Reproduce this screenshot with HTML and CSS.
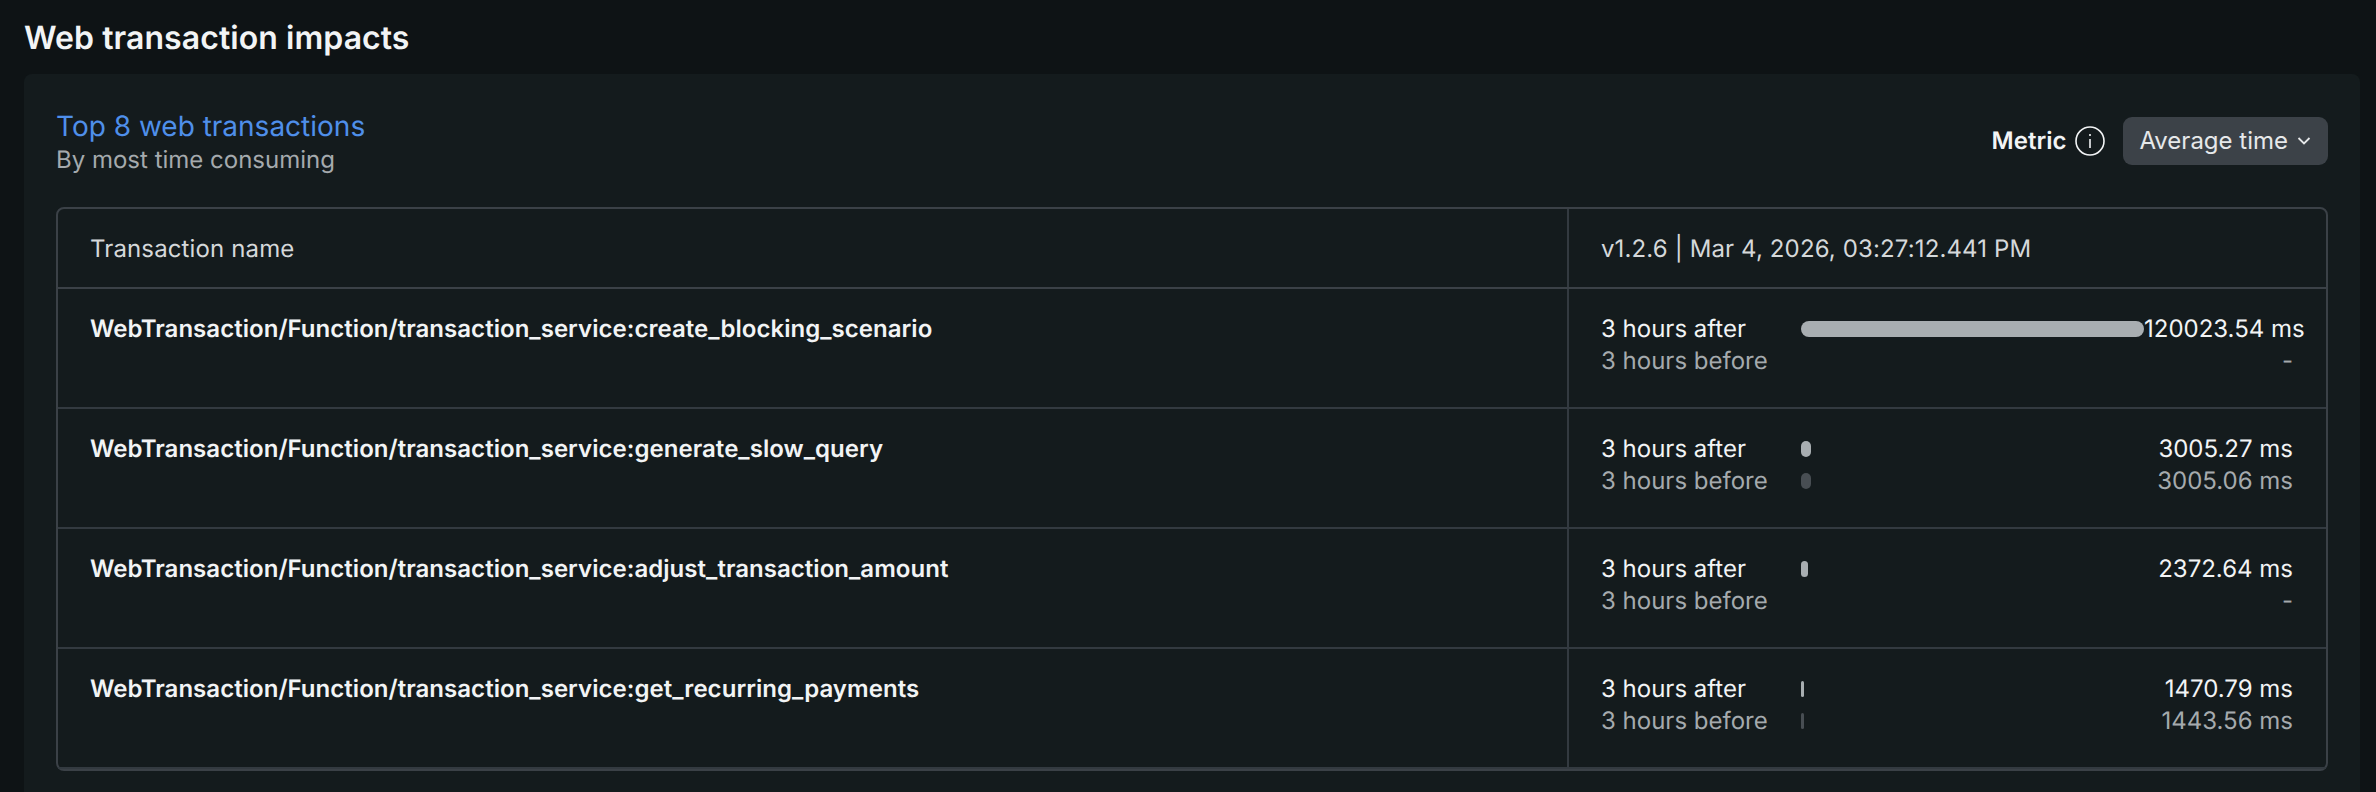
FILE: index.html
```html
<!DOCTYPE html>
<html>
  <head>
    <meta name="viewport" content="width=device-width, initial-scale=1.0">
    <title>Web transaction impacts</title>
    <link rel="stylesheet" href="styles.css">
  </head>
  <body>
    <h1 class="page-title">Web transaction impacts</h1>
    <div class="card">
      <div class="card-header">
        <div class="card-heading">
          <a class="card-title" href="#">Top 8 web transactions</a>
          <div class="card-subtitle">By most time consuming</div>
        </div>
        <div class="metric">
          <span class="metric-label">Metric</span>
          <svg class="info-icon" viewBox="0 0 30 30" width="30" height="30" fill="none" stroke="#f2f4f5" stroke-width="1.6">
            <circle cx="15" cy="15" r="14"/>
            <path d="M15 13v9"/>
            <path d="M15 8v2"/>
          </svg>
          <button class="metric-select">
            Average time
            <svg viewBox="0 0 14 10" width="14" height="10" fill="none" stroke="#e6e8ea" stroke-width="1.8">
              <path d="M1.5 2 7 7.5 12.5 2"/>
            </svg>
          </button>
        </div>
      </div>

      <div class="table">
        <div class="row head">
          <div class="name-cell">Transaction name</div>
          <div class="data-cell">v1.2.6 | Mar 4, 2026, 03:27:12.441 PM</div>
        </div>

        <div class="row">
          <div class="name-cell">WebTransaction/Function/transaction_service:create_blocking_scenario</div>
          <div class="data-cell">
            <div class="line">
              <span class="period">3 hours after</span>
              <span class="track"><span class="bar" style="width: 343px"></span></span>
              <span class="value">120023.54 ms</span>
            </div>
            <div class="line before">
              <span class="period">3 hours before</span>
              <span class="track"></span>
              <span class="value">-</span>
            </div>
          </div>
        </div>

        <div class="row">
          <div class="name-cell">WebTransaction/Function/transaction_service:generate_slow_query</div>
          <div class="data-cell">
            <div class="line">
              <span class="period">3 hours after</span>
              <span class="track"><span class="bar" style="width: 10px"></span></span>
              <span class="value">3005.27 ms</span>
            </div>
            <div class="line before">
              <span class="period">3 hours before</span>
              <span class="track"><span class="bar" style="width: 10px"></span></span>
              <span class="value">3005.06 ms</span>
            </div>
          </div>
        </div>

        <div class="row">
          <div class="name-cell">WebTransaction/Function/transaction_service:adjust_transaction_amount</div>
          <div class="data-cell">
            <div class="line">
              <span class="period">3 hours after</span>
              <span class="track"><span class="bar" style="width: 7px"></span></span>
              <span class="value">2372.64 ms</span>
            </div>
            <div class="line before">
              <span class="period">3 hours before</span>
              <span class="track"></span>
              <span class="value">-</span>
            </div>
          </div>
        </div>

        <div class="row">
          <div class="name-cell">WebTransaction/Function/transaction_service:get_recurring_payments</div>
          <div class="data-cell">
            <div class="line">
              <span class="period">3 hours after</span>
              <span class="track"><span class="bar" style="width: 3px"></span></span>
              <span class="value">1470.79 ms</span>
            </div>
            <div class="line before">
              <span class="period">3 hours before</span>
              <span class="track"><span class="bar" style="width: 3px"></span></span>
              <span class="value">1443.56 ms</span>
            </div>
          </div>
        </div>
      </div>
    </div>
  </body>
</html>
```

FILE: styles.css
```css
/* Page styles */
body {
  margin: 0;
  height: 792px;
  overflow: hidden;
  padding: 0 16px 0 24px;
  box-sizing: border-box;
  background-color: #0e1315;
  color: #f2f4f5;
  font-family: Inter, "Liberation Sans", sans-serif;
  font-size: 24px;
  line-height: 32px;
  text-rendering: geometricPrecision;
}

.page-title {
  margin: 0;
  height: 74px;
  line-height: 76px;
  font-size: 32px;
  font-weight: 600;
  letter-spacing: 0.06px;
}

/* Card styles */
.card {
  height: 718px;
  padding: 32px 32px 0;
  box-sizing: border-box;
  background-color: #141b1d;
  border-radius: 8px 8px 0 0;
}

.card-header {
  display: flex;
  justify-content: space-between;
  align-items: flex-start;
  height: 101px;
}

.card-heading {
  padding-top: 2px;
}

.card-title {
  color: #4f8fea;
  font-size: 28px;
  line-height: 36px;
  text-decoration: none;
}

.card-subtitle {
  color: #a5aaad;
}

.metric {
  display: flex;
  align-items: center;
  margin-top: 11px;
}

.metric-label {
  font-weight: 600;
  margin-right: 9px;
}

.info-icon {
  margin-right: 18px;
}

.metric-select {
  display: flex;
  align-items: center;
  gap: 9px;
  height: 48px;
  padding: 0 17px 0 16px;
  border: 0;
  border-radius: 9px;
  background-color: #3c4248;
  color: #e6e8ea;
  font: inherit;
}

/* Table styles */
.table {
  border: 2px solid #3b4147;
  border-radius: 8px;
}

.row {
  display: flex;
  height: 120px;
  box-sizing: border-box;
  border-bottom: 2px solid #333a40;
}

.row.head {
  height: 80px;
  border-bottom-color: #3b4147;
  color: #d5d8da;
  line-height: 80px;
  letter-spacing: 0.13px;
}

.name-cell {
  flex: 0 0 1509px;
  padding: 24px 0 0 32px;
  box-sizing: border-box;
  font-weight: 600;
  letter-spacing: 0.04px;
}

.data-cell {
  flex: 1;
  min-width: 0;
  padding: 24px 33px 0 32px;
  border-left: 2px solid #333a40;
}

.row.head .name-cell {
  padding-top: 0;
  font-weight: 400;
  letter-spacing: inherit;
}

.row.head .data-cell {
  padding-top: 0;
}

.line {
  display: flex;
  white-space: nowrap;
}

.line.before {
  color: #a5aaad;
}

.period {
  flex: 0 0 200px;
}

.track {
  display: flex;
  flex: 0 0 343px;
  align-items: center;
}

.bar {
  height: 16px;
  border-radius: 8px;
  background-color: #a8aeb1;
}

.before .bar {
  background-color: #484e53;
}

.value {
  flex: 1;
  min-width: 0;
  text-align: right;
}
```
